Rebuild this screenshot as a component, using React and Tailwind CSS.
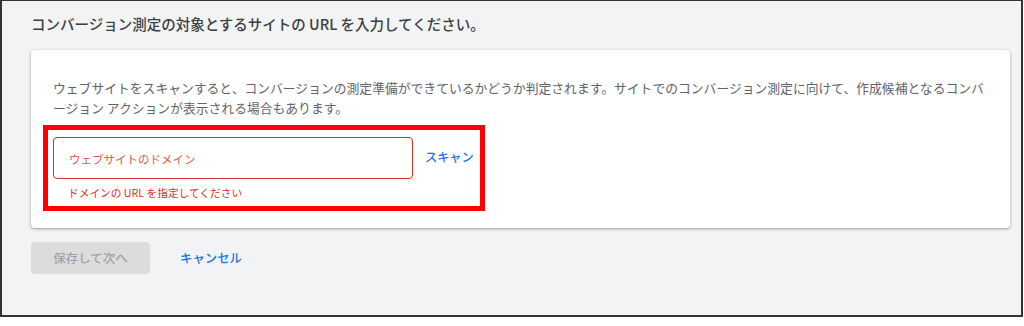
const medium = { fontFamily: '"Noto Sans CJK JP Medium", "Noto Sans CJK JP", "Noto Sans", sans-serif' };

export default function App() {
  return (
    <div lang="ja" className="w-[1024px] h-[326px] bg-white" style={{ fontFamily: '"Noto Sans CJK JP", "Noto Sans", sans-serif' }}>
      <div className="w-[1023px] h-[317px] border-t border-r-2 border-b-2 border-l-2 border-[#333333] bg-[#f1f3f4] pl-[29px]">
        {/* title */}
        <h1 style={medium} className="pt-[13px] text-[14.5px] leading-[20px] font-normal text-[#3c4043]">
          コンバージョン測定の対象とするサイトの URL を入力してください。
        </h1>

        {/* card */}
        <div className="mt-[16px] w-[979px] bg-white rounded-[4px] shadow-[0_1px_2px_rgba(60,64,67,0.3),0_1px_3px_1px_rgba(60,64,67,0.15)] pt-[28px] pb-[17px] px-[22px]">
          <p className="text-[12.8px] leading-[20px] text-[#5f6368]">
            ウェブサイトをスキャンすると、コンバージョンの測定準備ができているかどうか判定されます。サイトでのコンバージョン測定に向けて、作成候補となるコンバージョン アクションが表示される場合もあります。
          </p>

          <div className="mt-[7px] -ml-[10px] w-[442px] h-[86px] border-[5px] border-[#ff0000] pl-[5px] pt-[7px]">
            <div className="flex items-center">
              <div className="w-[360px] h-[42px] border border-[#d93025] rounded-[4px] flex items-center pl-[15px] pt-[4px]">
                <span className="text-[11.5px] text-[#e0574c]">ウェブサイトのドメイン</span>
              </div>
              <button style={medium} className="ml-[12px] -mt-[2px] text-[12.2px] text-[#1a73e8]">スキャン</button>
            </div>
            <div className="mt-[7px] pl-[15px] text-[10.7px] leading-[14px] text-[#d93025]">
              ドメインの URL を指定してください
            </div>
          </div>
        </div>

        {/* actions */}
        <div className="mt-[14px] flex items-center">
          <button disabled style={medium} className="w-[119px] h-[32px] rounded-[4px] bg-[#dcdcdd] text-[12.5px] text-[#a0a3a7]">
            保存して次へ
          </button>
          <button style={medium} className="ml-[30px] text-[12.4px] text-[#1a73e8]">キャンセル</button>
        </div>
      </div>
    </div>
  );
}
